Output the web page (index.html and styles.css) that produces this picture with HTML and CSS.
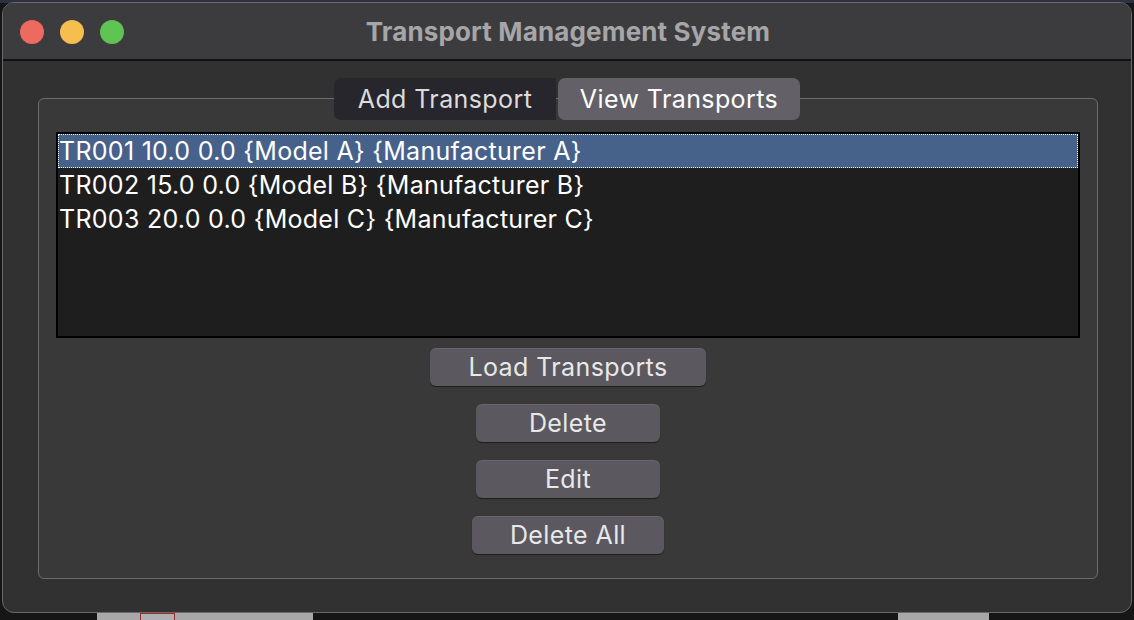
FILE: index.html
```html
<!DOCTYPE html>
<html>
<head>
<meta charset="utf-8">
<link rel="stylesheet" href="styles.css">
</head>
<body>
<div class="desk">
  <div class="window">
    <div class="titlebar">
      <div class="lights">
        <span class="light red"></span>
        <span class="light yellow"></span>
        <span class="light green"></span>
      </div>
      <div class="title">Transport Management System</div>
    </div>
    <div class="content">
      <div class="tabs">
        <div class="tab">Add Transport</div>
        <div class="tab active">View Transports</div>
      </div>
      <div class="group">
        <div class="listbox">
          <div class="row selected">TR001 10.0 0.0 {Model A} {Manufacturer A}</div>
          <div class="row">TR002 15.0 0.0 {Model B} {Manufacturer B}</div>
          <div class="row">TR003 20.0 0.0 {Model C} {Manufacturer C}</div>
        </div>
        <div class="buttons">
          <button class="btn btn-load">Load Transports</button>
          <button class="btn btn-mid">Delete</button>
          <button class="btn btn-mid">Edit</button>
          <button class="btn btn-all">Delete All</button>
        </div>
      </div>
    </div>
  </div>
  <div class="under">
    <div class="ghost ghost-left"><span class="ghost-tag"></span></div>
    <div class="ghost ghost-right"></div>
  </div>
</div>
</body>
</html>
```
FILE: styles.css
```css
* { box-sizing: border-box; }
html, body { margin: 0; padding: 0; }
body {
  width: 1134px;
  height: 620px;
  overflow: hidden;
  background: #161616;
  font-family: Inter, "Open Sans", sans-serif;
}
.desk {
  width: 1134px;
  height: 620px;
  padding: 2px 2px 0 2px;
  background: linear-gradient(#2c3142 0, #2c3142 3px, #161616 3px);
}
.window {
  width: 1130px;
  height: 611px;
  border: 1px solid #6a6a6c;
  border-radius: 12px;
  background: #313131;
  overflow: hidden;
  display: flex;
  flex-direction: column;
}
.titlebar {
  height: 58px;
  flex: none;
  background: #3c3c3e;
  border-bottom: 2px solid #121212;
  position: relative;
  display: flex;
  align-items: center;
  justify-content: center;
}
.lights {
  position: absolute;
  left: 17px;
  top: 17px;
  display: flex;
  gap: 16px;
}
.light {
  width: 24px;
  height: 24px;
  border-radius: 50%;
  display: block;
}
.red { background: #ee695e; }
.yellow { background: #f5be4f; }
.green { background: #5ec453; }
.title {
  color: #a6a6a8;
  font-size: 26px;
  font-weight: 700;
  letter-spacing: 0.15px;
  margin-left: 2px;
}
.content {
  flex: 1;
  padding: 17px 33px 0 35px;
  display: flex;
  flex-direction: column;
}
.tabs {
  align-self: center;
  display: flex;
  gap: 2px;
  position: relative;
  z-index: 1;
  margin-left: -2px;
}
.tab {
  height: 42px;
  line-height: 42px;
  font-size: 25px;
  letter-spacing: 0.4px;
  color: #dcdcdc;
  background: #27262c;
  border-radius: 7px 0 0 7px;
  width: 222px;
  text-align: center;
}
.tab.active {
  background: #636167;
  color: #ffffff;
  border-radius: 7px;
  width: 242px;
}
.group {
  margin-top: -22px;
  height: 481px;
  border: 1px solid #6c6c6c;
  border-radius: 6px;
  background: #393939;
  padding: 33px 17px 0 17px;
  display: flex;
  flex-direction: column;
}
.listbox {
  height: 206px;
  border: 2px solid #000;
  background: #1e1e1e;
  flex: none;
}
.row {
  height: 34px;
  line-height: 34px;
  padding-left: 1px;
  font-size: 25px;
  letter-spacing: 0.28px;
  color: #ffffff;
  white-space: nowrap;
}
.row.selected {
  background: #46628b;
  outline: 1px dotted #ffffff;
  outline-offset: -1px;
}
.buttons {
  display: flex;
  flex-direction: column;
  align-items: center;
  gap: 18px;
  margin-top: 10px;
}
.btn {
  height: 38px;
  border: none;
  border-radius: 6px;
  background: #5b595f;
  color: #e8e8e8;
  font-family: Inter, "Open Sans", sans-serif;
  font-size: 25px;
  letter-spacing: 0.4px;
  padding: 0;
  box-shadow: 0 1px 1px rgba(0,0,0,0.5), inset 0 1px 0 rgba(255,255,255,0.08);
}
.btn-load { width: 276px; }
.btn-mid { width: 184px; }
.btn-all { width: 192px; }
.under {
  position: relative;
  height: 7px;
}
.ghost {
  position: absolute;
  top: 0;
  height: 8px;
  background: #a8a8a8;
}
.ghost-left { left: 95px; width: 216px; }
.ghost-right { left: 896px; width: 91px; }
.ghost-tag {
  position: absolute;
  left: 43px;
  top: 0;
  width: 35px;
  height: 8px;
  border: 1px solid #9b2a2a;
  background: #b0b0b0;
}
```
